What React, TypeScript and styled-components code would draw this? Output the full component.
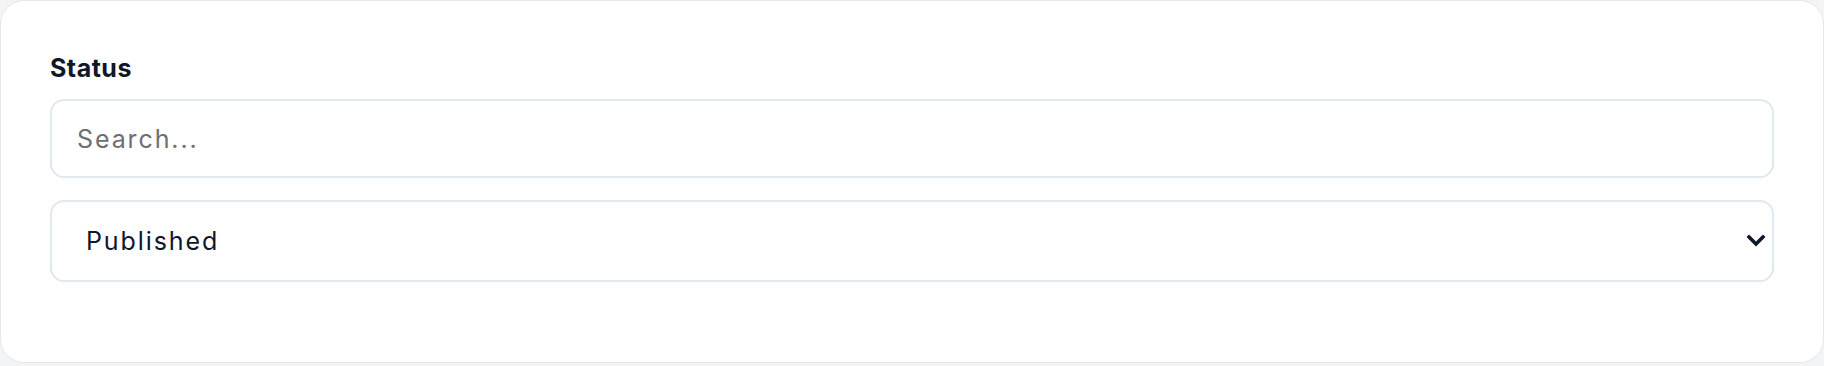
import React from "react";
import styled, { createGlobalStyle } from "styled-components";

const GlobalStyle = createGlobalStyle`
  html, body {
    margin: 0;
    padding: 0;
    background: #f3f4f6;
  }
  * { box-sizing: border-box; }
`;

const Card = styled.section`
  width: 1824px;
  height: 363px;
  background: #ffffff;
  border: 1px solid #e5e7eb;
  border-radius: 24px;
  padding: 52px 49px 0 49px;
  display: flex;
  flex-direction: column;
  font-family: "Inter", "Noto Sans", sans-serif;
`;

const Label = styled.label`
  display: block;
  font-size: 25px;
  line-height: 30px;
  font-weight: 700;
  color: #0f172a;
  letter-spacing: 0.5px;
  margin-bottom: 16px;
`;

const Field = styled.div`
  display: flex;
  flex-direction: column;
  gap: 22px;
`;

const SearchInput = styled.input`
  width: 100%;
  height: 79px;
  border: 2px solid #e2e8f0;
  border-radius: 14px;
  padding: 0 24px 0 25px;
  font-family: inherit;
  font-size: 25px;
  letter-spacing: 1.9px;
  color: #0f172a;
  background: #ffffff;
  outline: none;
  &::placeholder {
    color: #6e6e73;
  }
`;

const SelectWrap = styled.div`
  position: relative;
  width: 100%;
`;

const Select = styled.select`
  width: 100%;
  height: 82px;
  border: 2px solid #e2e8f0;
  border-radius: 14px;
  padding: 0 48px 0 34px;
  font-family: inherit;
  font-size: 25px;
  letter-spacing: 1.9px;
  color: #0f172a;
  background: #ffffff;
  appearance: none;
  -webkit-appearance: none;
  outline: none;
`;

const Chevron = styled.svg`
  position: absolute;
  right: 9px;
  top: 50%;
  transform: translateY(-50%);
  width: 18px;
  height: 13px;
  pointer-events: none;
`;

export default function App() {
  return (
    <>
      <GlobalStyle />
      <Card>
        <Label htmlFor="status-search">Status</Label>
        <Field>
          <SearchInput id="status-search" type="text" placeholder="Search..." />
          <SelectWrap>
            <Select defaultValue="published">
              <option value="draft">Draft</option>
              <option value="published">Published</option>
              <option value="archived">Archived</option>
            </Select>
            <Chevron viewBox="0 0 18 13" fill="none">
              <polyline
                points="2,2.5 9,9.5 16,2.5"
                stroke="#0f172a"
                strokeWidth="3.6"
                strokeLinecap="square"
                strokeLinejoin="miter"
              />
            </Chevron>
          </SelectWrap>
        </Field>
      </Card>
    </>
  );
}
